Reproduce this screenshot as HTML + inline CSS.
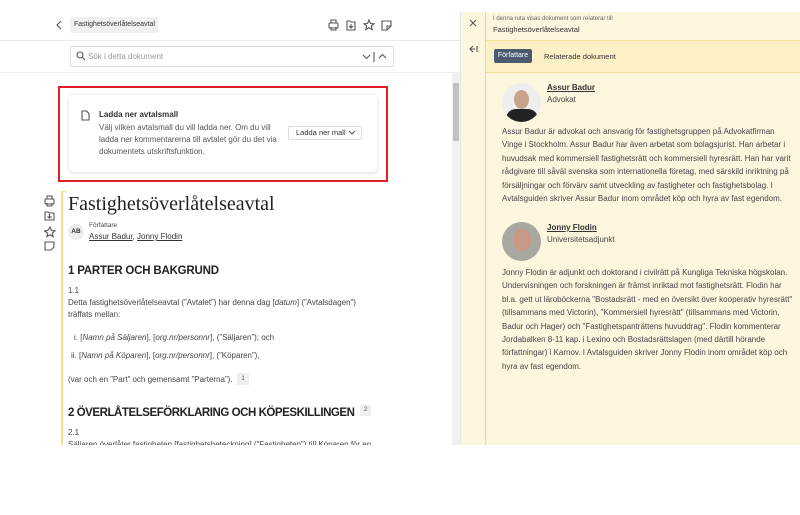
<!DOCTYPE html>
<html><head><meta charset="utf-8"><style>
*{box-sizing:border-box;margin:0;padding:0}
body{width:800px;height:515px;background:#fff;font-family:"Liberation Sans",sans-serif;color:#333;position:relative;overflow:hidden}
.a{position:absolute}
svg{display:block}
.ic{stroke:#555;fill:none;stroke-width:1.1}
.rp{font-size:8px;line-height:13.4px;color:#444}
.doc{font-size:8px;color:#444}
u{text-decoration:underline}
</style></head><body>
<!-- top bar -->
<div class="a" style="left:0;top:40px;width:460px;height:1px;background:#e8e8e8"></div>
<svg class="a" style="left:55px;top:20px" width="8" height="10"><path class="ic" d="M6 1L2 5L6 9"/></svg>
<div class="a" style="left:70px;top:17px;width:88px;height:16px;background:#f0f0f0;border-radius:2px;font-size:7px;line-height:16px;padding-left:4px;color:#333">Fastighetsöverlåtelseavtal</div>
<svg class="a" style="left:327px;top:19px" width="70" height="12">
<g class="ic"><rect x="2" y="4" width="9" height="5" rx="1"/><path d="M4 4V1h5v3M4 8v3h5V8"/>
<path d="M20 2h3l1 1h4v8h-8z M24 5v4M22 7l2 2 2-2"/>
<path d="M42 1l1.5 3.5 3.5.3-2.7 2.3.9 3.6-3.2-2-3.2 2 .9-3.6-2.7-2.3 3.5-.3z"/>
<path d="M55 2h9v5l-4 4h-5z M60 11V7h4"/></g></svg>
<!-- search -->
<div class="a" style="left:70px;top:46px;width:324px;height:21px;border:1px solid #ddd;border-radius:2px"></div>
<svg class="a" style="left:76px;top:51px" width="10" height="10"><circle class="ic" cx="4" cy="4" r="3" stroke="#999"/><path class="ic" stroke="#999" d="M6.5 6.5L9 9"/></svg>
<div class="a" style="left:88px;top:52px;font-size:8px;color:#999">Sök i detta dokument</div>
<svg class="a" style="left:362px;top:51px" width="28" height="12"><path class="ic" stroke="#bbb" d="M1 4l3.5 3.5L8 4M12 1v10M17 7l3.5-3.5L24 7"/></svg>
<div class="a" style="left:0;top:72px;width:460px;height:1px;background:#eee"></div>
<!-- scrollbar -->
<div class="a" style="left:452px;top:73px;width:8px;height:372px;background:#f1f1f1"></div>
<div class="a" style="left:453px;top:83px;width:6px;height:58px;background:#c1c1c1"></div>
<!-- red box card -->
<div class="a" style="left:58px;top:86px;width:330px;height:96px;border:2px solid #e41e26"></div>
<div class="a" style="left:69px;top:95px;width:308px;height:77px;background:#fff;border-radius:4px;box-shadow:0 1px 4px rgba(0,0,0,.15)"></div>
<svg class="a" style="left:81px;top:110px" width="9" height="11"><path class="ic" stroke="#333" d="M1 1h4.5l2.5 2.5V10H1z"/></svg>
<div class="a" style="left:99px;top:110px;font-size:8px;font-weight:bold;color:#333">Ladda ner avtalsmall</div>
<div class="a" style="left:99px;top:122px;width:190px;font-size:8px;line-height:12px;color:#555">Välj vilken avtalsmall du vill ladda ner. Om du vill ladda ner kommentarerna till avtalet gör du det via dokumentets utskriftsfunktion.</div>
<div class="a" style="left:288px;top:126px;width:74px;height:14px;border:1px solid #ddd;border-radius:2px;font-size:7.5px;line-height:12px;padding-left:7px;color:#333">Ladda ner mall</div>
<svg class="a" style="left:348px;top:130px" width="8" height="6"><path class="ic" d="M1 1l3 3 3-3"/></svg>
<!-- side icons -->
<svg class="a" style="left:44px;top:195px" width="12" height="56"><g class="ic" stroke="#666">
<rect x="1" y="4" width="9" height="5" rx="1"/><path d="M3 4V1h5v3M3 8v3h5V8"/>
<path d="M1 17h3l1 1h5v7H1z M5.5 19v4M3.5 21.5l2 1.5 2-1.5"/>
<path d="M6 32l1.5 3.5 3.5.3-2.7 2.3.9 3.6-3.2-2-3.2 2 .9-3.6L.2 35.8l3.5-.3z"/>
<path d="M1 47h9v5l-3 3H1z"/></g></svg>
<div class="a" style="left:61px;top:191px;width:2px;height:254px;background:#f6e08c"></div>
<div class="a" style="left:61px;top:191px;width:5px;height:1px;background:#f6e08c"></div>
<div class="a" style="left:68px;top:193px;font-family:'Liberation Serif',serif;font-size:20px;color:#222">Fastighetsöverlåtelseavtal</div>
<div class="a" style="left:68px;top:224px;width:16px;height:16px;border-radius:50%;background:#eee;font-size:6.5px;font-weight:bold;line-height:16px;text-align:center;color:#333">AB</div>
<div class="a" style="left:89px;top:222px;font-size:6.5px;color:#444">Författare</div>
<div class="a" style="left:89px;top:232px;font-size:8px;color:#333"><u>Assur Badur</u>, <u>Jonny Flodin</u></div>
<div class="a" style="left:68px;top:265px;font-size:11.5px;font-weight:bold;color:#222;letter-spacing:-0.2px">1 PARTER OCH BAKGRUND</div>
<div class="a doc" style="left:68px;top:286px">1.1</div>
<div class="a doc" style="left:68px;top:297px;line-height:12px;width:300px">Detta fastighetsöverlåtelseavtal (”Avtalet”) har denna dag [<i>datum</i>] (”Avtalsdagen”) träffats mellan:</div>
<div class="a doc" style="left:74px;top:333px">i. [<i>Namn på Säljaren</i>], [<i>org.nr/personnr</i>], (”Säljaren”); och</div>
<div class="a doc" style="left:71px;top:351px">ii. [<i>Namn på Köparen</i>], [<i>org.nr/personnr</i>], (”Köparen”),</div>
<div class="a doc" style="left:68px;top:375px">(var och en ”Part” och gemensamt ”Parterna”).</div>
<div class="a" style="left:237px;top:373px;width:12px;height:12px;background:#eee;font-size:6px;line-height:12px;text-align:center;color:#555">1</div>
<div class="a" style="left:68px;top:407px;font-size:11.5px;font-weight:bold;color:#222;letter-spacing:-0.45px">2 ÖVERLÅTELSEFÖRKLARING OCH KÖPESKILLINGEN</div>
<div class="a" style="left:360px;top:405px;width:11px;height:11px;background:#eee;font-size:6px;line-height:11px;text-align:center;color:#555">2</div>
<div class="a doc" style="left:68px;top:428px">2.1</div>
<div class="a doc" style="left:68px;top:439px;height:6px;overflow:hidden;width:330px;line-height:12px">Säljaren överlåter fastigheten [fastighetsbeteckning] (”Fastigheten”) till Köparen för en</div>
<!-- right panel -->
<div class="a" style="left:460px;top:12px;width:340px;height:433px;background:#fdf6df;border-left:1px solid #e3e6ea"></div>
<div class="a" style="left:486px;top:40px;width:314px;height:32px;background:#fcf0c6"></div>
<div class="a" style="left:486px;top:40px;width:314px;height:1px;background:#f3e29a"></div>
<div class="a" style="left:486px;top:72px;width:314px;height:1px;background:#f3e29a"></div>
<div class="a" style="left:485px;top:12px;width:1px;height:433px;background:#f2d77a"></div>
<svg class="a" style="left:469px;top:19px" width="8" height="8"><path class="ic" d="M1 1l6 6M7 1L1 7"/></svg>
<svg class="a" style="left:468px;top:45px" width="10" height="8"><path class="ic" d="M5 1L2 4l3 3M2 4h5M9 1v6"/></svg>
<div class="a" style="left:493px;top:16px;font-size:6px;color:#666">I denna ruta visas dokument som relaterar till</div>
<div class="a" style="left:493px;top:25px;font-size:7.5px;color:#333">Fastighetsöverlåtelseavtal</div>
<div class="a" style="left:494px;top:49px;width:38px;height:14px;background:#4a5a70;border-radius:2px;font-size:7px;color:#fff;line-height:14px;text-align:center">Författare</div>
<div class="a" style="left:544px;top:52px;font-size:7.5px;color:#333">Relaterade dokument</div>
<div class="a" style="left:502px;top:83px;width:39px;height:39px;border-radius:50%;background:#eee;overflow:hidden"><div style="margin:7px auto 0;width:15px;height:19px;border-radius:50%;background:#c9a48c"></div><div style="margin:0 auto;width:32px;height:14px;border-radius:10px 10px 0 0;background:#222"></div></div>
<div class="a" style="left:547px;top:83px;font-size:8px;font-weight:bold;color:#333"><u>Assur Badur</u></div>
<div class="a" style="left:547px;top:95px;font-size:8px;color:#444">Advokat</div>
<div class="a rp" style="left:502px;top:125px;width:292px">Assur Badur är advokat och ansvarig för fastighetsgruppen på Advokatfirman Vinge i Stockholm. Assur Badur har även arbetat som bolagsjurist. Han arbetar i huvudsak med kommersiell fastighetsrätt och kommersiell hyresrätt. Han har varit rådgivare till såväl svenska som internationella företag, med särskild inriktning på försäljningar och förvärv samt utveckling av fastigheter och fastighetsbolag. I Avtalsguiden skriver Assur Badur inom området köp och hyra av fast egendom.</div>
<div class="a" style="left:502px;top:222px;width:39px;height:39px;border-radius:50%;background:#a8a8a0;overflow:hidden"><div style="margin:7px auto 0;width:18px;height:22px;border-radius:50%;background:#c69a84"></div></div>
<div class="a" style="left:547px;top:223px;font-size:8px;font-weight:bold;color:#333"><u>Jonny Flodin</u></div>
<div class="a" style="left:547px;top:235px;font-size:8px;color:#444">Universitetsadjunkt</div>
<div class="a rp" style="left:502px;top:266px;width:294px">Jonny Flodin är adjunkt och doktorand i civilrätt på Kungliga Tekniska högskolan. Undervisningen och forskningen är främst inriktad mot fastighetsrätt. Flodin har bl.a. gett ut läroböckerna "Bostadsrätt - med en översikt över kooperativ hyresrätt" (tillsammans med Victorin), "Kommersiell hyresrätt" (tillsammans med Victorin, Badur och Hager) och "Fastighetspanträttens huvuddrag". Flodin kommenterar Jordabalken 8-11 kap. i Lexino och Bostadsrättslagen (med därtill hörande författningar) i Karnov. I Avtalsguiden skriver Jonny Flodin inom området köp och hyra av fast egendom.</div>
</body></html>
